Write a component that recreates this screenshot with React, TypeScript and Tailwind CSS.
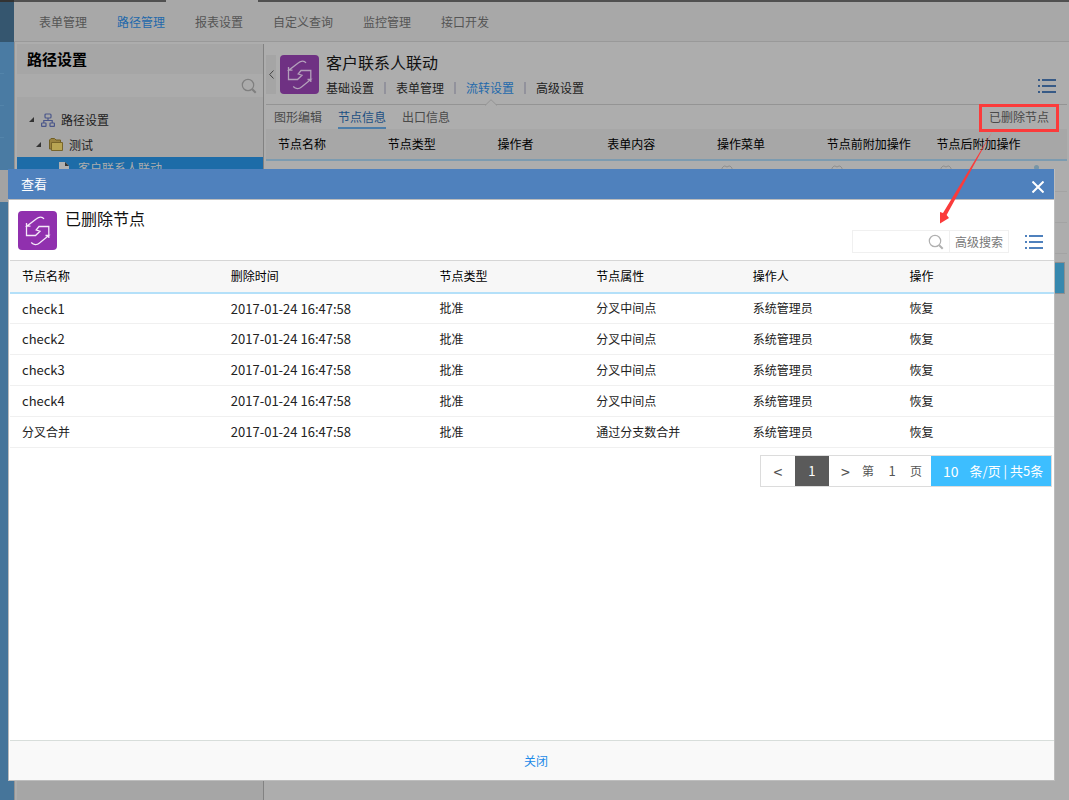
import React from "react";

const navItems = ["表单管理", "路径管理", "报表设置", "自定义查询", "监控管理", "接口开发"];
const tabs = ["基础设置", "表单管理", "流转设置", "高级设置"];
const subTabs = ["图形编辑", "节点信息", "出口信息"];
const nodeColumns = ["节点名称", "节点类型", "操作者", "表单内容", "操作菜单", "节点前附加操作", "节点后附加操作"];
const deletedColumns = ["节点名称", "删除时间", "节点类型", "节点属性", "操作人", "操作"];
const deletedNodes = [
  { name: "check1", attr: "分叉中间点" },
  { name: "check2", attr: "分叉中间点" },
  { name: "check3", attr: "分叉中间点" },
  { name: "check4", attr: "分叉中间点" },
  { name: "分叉合并", attr: "通过分支数合并" },
];

function FlowIcon({ className }: { className: string }) {
  return (
    <svg viewBox="0 0 39 39" className={`size-[39px] shrink-0 rounded ${className}`} fill="none" stroke="currentColor" strokeWidth="1.3" aria-hidden="true">
      <path d="M26 8C24.500 5.500 21 5.500 18.500 7.800L8.800 15.200H12.500M8.500 12V24.500H17.500L22 20.200L18.200 19L21 15.500H30.800V27M27.500 24.500H30.800L21.500 32C19 34.200 15.500 34 13.200 31.500" />
    </svg>
  );
}

function SearchIcon({ className }: { className: string }) {
  return (
    <svg viewBox="0 0 16 16" className={`size-4 shrink-0 ${className}`} fill="none" stroke="currentColor" aria-hidden="true">
      <circle cx="7" cy="7" r="5.700" strokeWidth="1.200" />
      <path d="M11.200 11.200L14.700 14.700" strokeWidth="2" />
    </svg>
  );
}

function ListIcon({ className }: { className: string }) {
  return (
    <svg viewBox="0 0 18 14" className={`h-[14px] w-[18px] ${className}`} fill="currentColor" aria-hidden="true">
      <path d="M0 0h2v2H0zM4 0h14v2H4zM0 6h2v2H0zM4 6h14v2H4zM0 12h2v2H0zM4 12h14v2H4z" />
    </svg>
  );
}

function Caret() {
  return (
    <svg viewBox="0 0 5 5" className="size-[5px]" fill="#333" aria-hidden="true">
      <path d="M5 0V5H0z" />
    </svg>
  );
}

function BadgeIcon() {
  return (
    <svg viewBox="0 0 12 12" className="size-3" fill="none" stroke="#8f8f8f" aria-hidden="true">
      <path d="M1 11V3L3 1H4L6 2L8 1H9L11 3V11" />
    </svg>
  );
}

function SideRail() {
  return (
    <div className="flex w-[14px] shrink-0 flex-col bg-[#46759a]">
      <div className="h-[42px] border-t-2 border-[#333] bg-[#35566f]" />
      <div className="flex h-32 flex-col bg-[#4a7ba3]">
        <span className="h-8 w-1 border-b border-[#5384aa]" />
        <span className="h-8 w-1 border-b border-[#5384aa]" />
        <span className="h-8 w-1 border-b border-[#5384aa]" />
      </div>
      <div className="h-8 bg-[#a3a3a3]" />
    </div>
  );
}

function Sidebar() {
  return (
    <aside className="flex w-[250px] shrink-0 flex-col border-l border-l-[#929292] bg-[#adadad] pt-[2px] pl-[2px]">
      <div className="flex grow flex-col border-r border-r-[#828282] bg-[#a6a6a6]">
        <h2 className="h-[30px] pl-[10px] text-[15px] leading-[30px] font-bold text-black">路径设置</h2>
        <label className="flex h-[23px] items-center bg-[#ababab] pr-[6px]">
          <input aria-label="搜索路径" className="min-w-0 grow bg-transparent outline-none" />
          <SearchIcon className="text-[#7f7f7f]" />
        </label>
        <ul className="pt-[10px] text-[#222]">
          <li className="flex h-[25px] items-center pl-3">
            <Caret />
            <svg viewBox="0 0 14 14" className="ml-[7px] size-[14px]" fill="none" stroke="#4a568a" strokeWidth="1.200" aria-hidden="true">
              <rect x="4" y="1" width="6" height="4" rx="1" />
              <rect x=".6" y="10" width="4.400" height="3.400" rx=".5" />
              <rect x="9" y="10" width="4.400" height="3.400" rx=".5" />
              <path d="M7 5V7.500M2.800 10V7.500H11.200V10" />
            </svg>
            <span className="ml-[6px]">路径设置</span>
          </li>
          <li className="flex h-[25px] items-center pl-[19px]">
            <Caret />
            <svg viewBox="0 0 14 13" className="ml-2 h-[13px] w-[14px]" aria-hidden="true">
              <path d="M.5 2L2 .5H5.500L7 2H11.500V11H.5z" fill="#9a8340" stroke="#705e24" />
              <path d="M2.500 4.500h11v8h-11z" fill="#b9a553" stroke="#78652a" />
            </svg>
            <span className="ml-[6px]">测试</span>
          </li>
          <li className="flex h-[22px] items-center bg-[#1d6ca8] pl-[42px] text-[#adadad]">
            <svg viewBox="0 0 11 13" className="h-[13px] w-[11px]" aria-hidden="true">
              <path d="M0 0h6l4 4v9H0z" fill="#b0b0b0" />
              <path d="M6 0l4 4H6z" fill="#333" />
            </svg>
            <span className="ml-2">客户联系人联动</span>
          </li>
        </ul>
      </div>
    </aside>
  );
}

function NodePanel() {
  return (
    <section className="min-w-0 grow bg-[#adadad] pr-[2px] pl-[2px]">
      <div className="flex h-[63px] items-start border-b border-[#949494] pt-[13px] pr-[11px]">
        <button aria-label="收起" className="flex h-[39px] w-[10px] items-center justify-center bg-[#a5a5a5] text-[#444]">
          <svg viewBox="0 0 5 9" className="h-[9px] w-[5px]" fill="none" stroke="currentColor" aria-hidden="true">
            <path d="M4.500 .5L.7 4.500L4.500 8.500" />
          </svg>
        </button>
        <FlowIcon className="ml-1 bg-[#6f3183] text-[#b3a0ba]" />
        <div className="ml-[7px]">
          <h1 className="-mt-[5px] mb-[2px] text-base leading-6 text-[#111]">客户联系人联动</h1>
          <div className="flex h-6 items-center text-[#222]">
            {tabs.map((t, i) => (
              <React.Fragment key={t}>
                {i > 0 && <span className="mx-[10px] h-3 w-[2px] bg-[#92929c]" />}
                <a href="#" className={t === "流转设置" ? "relative text-[#2369ab]" : ""}>
                  {t}
                  {t === "流转设置" && (
                    <svg viewBox="0 0 12 7" className="absolute top-[19px] left-[19px] h-[7px] w-3" fill="#adadad" stroke="#949494" aria-hidden="true">
                      <path d="M0 6.500L6 .7L12 6.500" />
                    </svg>
                  )}
                </a>
              </React.Fragment>
            ))}
          </div>
        </div>
        <button aria-label="菜单" className="mt-6 ml-auto">
          <ListIcon className="text-[#375a86]" />
        </button>
      </div>
      <div className="flex h-6 items-start gap-4 pr-[15px] pl-2 text-[#4a4a4a]">
        {subTabs.map((t) => (
          <a
            key={t}
            href="#"
            className={t === "节点信息" ? "h-6 border-b-2 border-[#4c7da8] leading-6 text-[#1c4f82]" : "h-6 leading-6"}
          >
            {t}
          </a>
        ))}
        <button className="ml-auto h-6 pr-[3px]">已删除节点</button>
      </div>
      <table className="w-full table-fixed text-left">
        <thead>
          <tr className="h-[31px] border-b-2 border-[#7c9bb0] bg-[#a7a7a7] text-black">
            {nodeColumns.map((c) => (
              <th key={c} className="w-[13.7%] pl-3 font-normal whitespace-nowrap">{c}</th>
            ))}
            <th />
          </tr>
        </thead>
        <tbody>
          {[0, 1, 2].map((r) => (
            <tr key={r} className="h-[31px] border-b border-[#a3a3a3] align-top">
              <td colSpan={4} />
              <td className="pt-1 pl-4"><BadgeIcon /></td>
              <td className="pt-1 pl-4"><BadgeIcon /></td>
              <td className="pt-1 pl-4"><BadgeIcon /></td>
              <td className="pt-1">{r === 0 && <span className="block size-[5px] rounded-full bg-[#7795a6]" />}</td>
            </tr>
          ))}
        </tbody>
      </table>
      <div className="mt-2 mr-[2px] ml-auto h-8 w-[120px] border border-[#8f8f8f] bg-[#3788ae]" />
    </section>
  );
}

function Pagination() {
  return (
    <nav aria-label="分页" className="mt-[7px] mr-[2px] ml-auto flex h-8 w-fit items-stretch border border-[#dcdcdc] text-[#555]">
      <button aria-label="上一页" className="w-[34px] text-base">&lt;</button>
      <button className="w-[34px] bg-[#5a5a5a] text-[13px] text-white">1</button>
      <button aria-label="下一页" className="w-[33px] text-base">&gt;</button>
      <label className="flex items-center">
        第
        <input aria-label="页码" defaultValue="1" className="w-9 bg-transparent text-center text-[13px] outline-none" />
        页
      </label>
      <div className="ml-[9px] flex w-[120px] items-center bg-[#3dbeff] pl-3 text-white">
        <span className="text-sm">10</span>
        <span className="ml-[11px] text-[13px] whitespace-nowrap">条/页 | 共5条</span>
      </div>
    </nav>
  );
}

function DeletedNodesDialog() {
  return (
    <div role="dialog" aria-label="查看" className="absolute top-[169px] right-[14px] bottom-[19px] left-2 flex flex-col border-x border-b border-[#bdbdbd] bg-white">
      <header className="-ml-px flex h-[31px] shrink-0 items-center justify-between border-b border-[#bdbdbd] bg-[#4f81bd] pr-[10px] pl-[13px] text-[13px] text-white">
        <h2>查看</h2>
        <button aria-label="关闭窗口" className="mt-[6px]">
          <svg viewBox="0 0 12 12" className="size-3" stroke="currentColor" strokeWidth="2" aria-hidden="true">
            <path d="M.5 .5L11.500 11.500M11.500 .5L.5 11.500" />
          </svg>
        </button>
      </header>
      <div className="flex h-[60px] shrink-0 items-start pt-[11px] pr-[11px] pl-[9px]">
        <FlowIcon className="bg-[#9030ae] text-[#f4e8f8]" />
        <h3 className="-mt-[5px] ml-2 text-base leading-6 text-[#111]">已删除节点</h3>
        <div className="mt-[19px] ml-auto flex h-[23px] border border-[#f0f0f0] text-[#777]">
          <label className="flex w-[97px] items-center border-r border-[#f0f0f0] pr-[5px]">
            <input aria-label="搜索" className="min-w-0 grow outline-none" />
            <SearchIcon className="text-[#b0b0b0]" />
          </label>
          <button className="w-[58px]">高级搜索</button>
        </div>
        <button aria-label="列表菜单" className="mt-6 ml-4">
          <ListIcon className="text-[#4f81bd]" />
        </button>
      </div>
      <div className="grow pl-px">
        <table className="w-full table-fixed text-left text-[#222]">
          <thead>
            <tr className="h-8 border-t border-b-2 border-t-[#d6d6d6] border-b-[#b4e0f9] bg-[#f7f7f7] text-black">
              {deletedColumns.map((c, i) => (
                <th key={c} className={i < 2 ? "w-[20%] pl-3 font-normal" : "w-[15%] pl-3 font-normal"}>{c}</th>
              ))}
            </tr>
          </thead>
          <tbody>
            {deletedNodes.map((n) => (
              <tr key={n.name} className="h-[31px] border-b border-[#f0f0f0]">
                <td className="pl-3">
                  <span className={n.name.startsWith("check") ? "text-[13px]" : ""}>{n.name}</span>
                </td>
                <td className="pl-3 text-[13px]">2017-01-24 16:47:58</td>
                <td className="pl-3">批准</td>
                <td className="pl-3">{n.attr}</td>
                <td className="pl-3">系统管理员</td>
                <td className="pl-3"><button>恢复</button></td>
              </tr>
            ))}
          </tbody>
        </table>
        <Pagination />
      </div>
      <footer className="ml-px flex h-10 shrink-0 items-center justify-center border-t border-[#d8dedb] bg-[#f9f9f9] pl-2">
        <button className="px-3 text-[#1c8ae8]">关闭</button>
      </footer>
    </div>
  );
}

export default function App() {
  return (
    <div className="relative flex min-h-screen overflow-hidden bg-[#adadad] font-['Noto_Sans_CJK_SC',sans-serif] text-xs">
      <SideRail />
      <div className="flex min-w-0 grow flex-col">
        <div className="flex h-[2px] bg-[#505050]">
          <span className="ml-[152px] w-[92px] bg-[#a8a8a8]" />
        </div>
        <nav className="flex h-10 items-center gap-[30px] border-b border-[#999] bg-[#a8a8a8] pl-[25px] text-[#555]">
          {navItems.map((n) => (
            <a key={n} href="#" className={n === "路径管理" ? "text-[#2369ab]" : ""}>{n}</a>
          ))}
        </nav>
        <div className="flex grow">
          <Sidebar />
          <NodePanel />
        </div>
      </div>
      <DeletedNodesDialog />
      <div className="pointer-events-none absolute top-[104px] right-[10px] h-7 w-20 border-[3px] border-[#fb3b3b]" />
      <svg viewBox="0 0 54 92" className="pointer-events-none absolute top-[132px] right-[76px] h-[92px] w-[54px]" fill="#fb3b3b" aria-hidden="true">
        <path d="M53 0L7.600 83L10 86L1 91.500L1 80L4 81z" />
      </svg>
    </div>
  );
}
